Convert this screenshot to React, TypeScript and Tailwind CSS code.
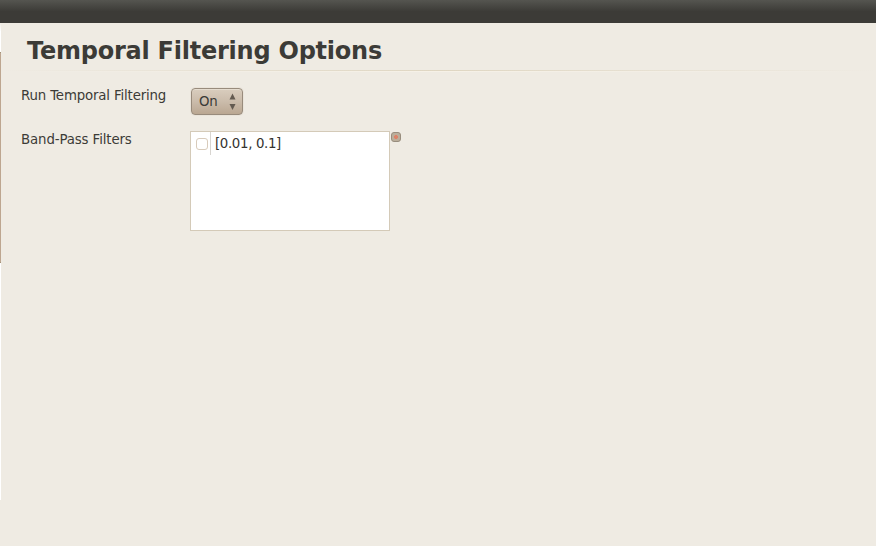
const label = "h-[20px] w-[169px] shrink-0 whitespace-nowrap text-[13.33px] leading-[20px]";

function WindowEdge() {
  return (
    <div className="flex w-px shrink-0 flex-col">
      <div className="h-[29px] bg-gradient-to-b from-[#efebe3] to-white to-30%" />
      <div className="h-[211px] border-y border-[#a39278] bg-[#bda690]" />
      <div className="h-[237px] bg-white" />
    </div>
  );
}

function Toggle() {
  return (
    <button className="mt-[6px] ml-px flex h-[27px] w-[52px] items-center justify-between rounded-[4px] border border-[#988b7c] bg-gradient-to-b from-[#d9cdbe] via-[#cbbcab] to-[#baa792] pr-[6px] pl-[7px] text-[13.33px] leading-[20px] tracking-[-0.3px] shadow-[inset_0_1px_0_#e5dccf,0_0_0_1px_#eae4da]">
      <span>On</span>
      <svg width="7" height="17" viewBox="0 0 7 17" fill="#635a50">
        <path d="M3.5 .5L6.5 6.5H.5z" />
        <path d="M3.5 17L.5 11H6.5z" />
      </svg>
    </button>
  );
}

function FilterList() {
  return (
    <div className="h-[100px] w-[200px] border border-[#d4cab8] bg-white">
      <div className="flex h-[23px]">
        <div className="flex w-[20px] items-center border-r border-[#d8d5d0] pl-[5px]">
          <div className="h-[12px] w-[12px] rounded-[3px] border border-[#d8cbbb] bg-white" />
        </div>
        <span className="pl-[4px] text-[13.33px] leading-[23px] tracking-[-0.35px] text-[#34332f]">[0.01, 0.1]</span>
      </div>
    </div>
  );
}

export default function App() {
  return (
    <div className="flex h-[546px] w-[876px] flex-col overflow-hidden bg-[#efebe3] font-['DejaVu_Sans',sans-serif] text-[#3c3b37]">
      <div className="h-[23px] shrink-0 bg-gradient-to-b from-[#555550] to-[#3c3b37] to-50%" />
      <div className="flex flex-1">
        <WindowEdge />
        <main className="flex flex-1 flex-col">
          <h1 className="mt-[12px] ml-[26px] h-[33px] text-[24px] leading-[32px] font-bold tracking-[-0.24px] whitespace-nowrap">
            Temporal Filtering Options
          </h1>
          <div className="mt-[2px] h-px bg-gradient-to-r from-transparent via-[#dfd6c2] to-transparent" />
          <div className="h-px bg-gradient-to-r from-transparent via-[#f6f1e7] to-transparent" />
          <div className="mt-[10px] ml-[20px] flex">
            <div className={`${label} mt-[4px] tracking-[-0.16px]`}>Run Temporal Filtering</div>
            <Toggle />
          </div>
          <div className="mt-[16px] ml-[20px] flex">
            <div className={`${label} -mt-px tracking-[-0.12px]`}>Band-Pass Filters</div>
            <FilterList />
            <button
              aria-label="Add filter"
              className="mt-px ml-px flex h-[10px] w-[10px] items-center justify-center rounded-[3px] border border-[#988d7e] bg-[#bbae9b]"
            >
              <span className="h-[4px] w-[4px] rounded-full border border-[#e8795f] bg-[#d38c72]" />
            </button>
          </div>
        </main>
      </div>
    </div>
  );
}
